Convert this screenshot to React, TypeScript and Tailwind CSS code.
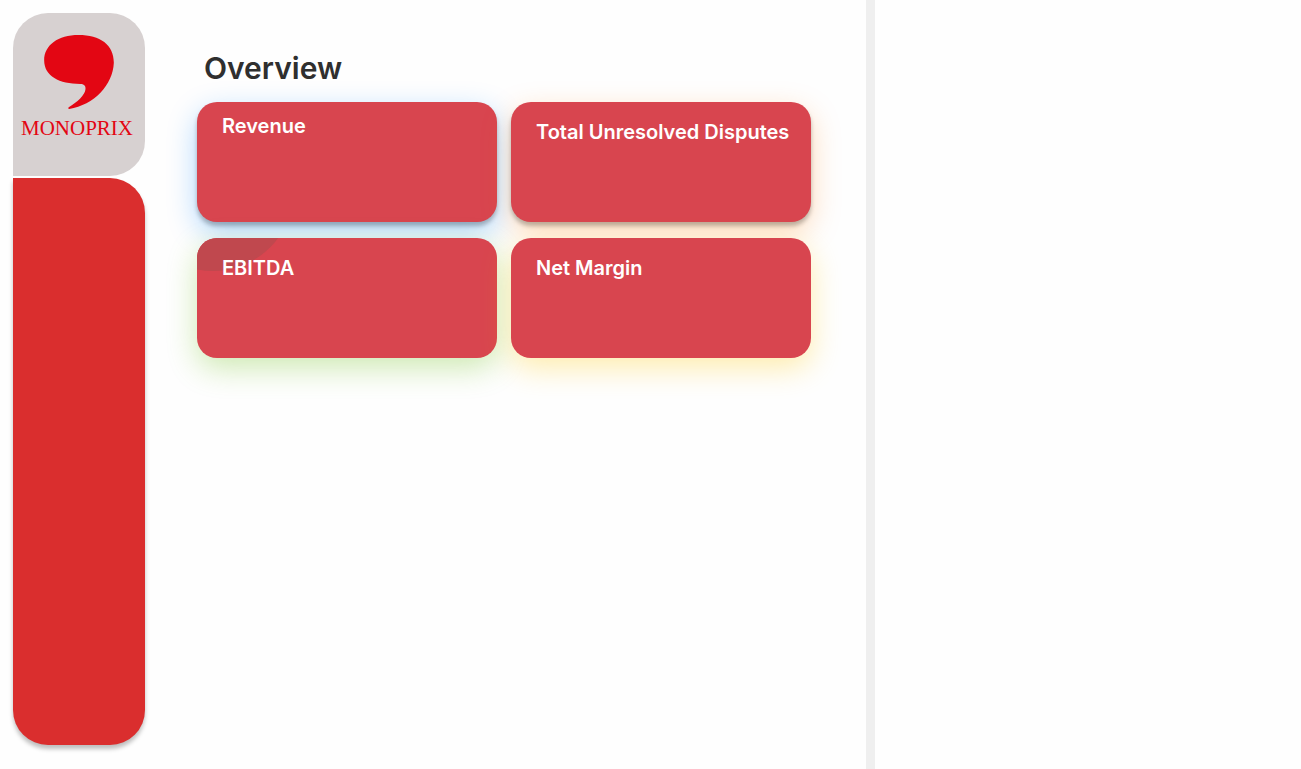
type Metric = { title: string; shadow: string; padding: string; accent?: boolean };

const metrics: Metric[] = [
  {
    title: 'Revenue',
    padding: 'pt-[10px]',
    shadow: 'shadow-[0_4px_4px_rgba(0,0,0,0.25),0_10px_30px_rgba(0,132,255,0.32)]',
  },
  {
    title: 'Total Unresolved Disputes',
    padding: 'pt-4',
    shadow: 'shadow-[0_4px_4px_rgba(0,0,0,0.25),0_10px_30px_rgba(255,122,0,0.28)]',
  },
  {
    title: 'EBITDA',
    padding: 'pt-4',
    shadow: 'shadow-[0_10px_30px_rgba(105,190,20,0.32)]',
    accent: true,
  },
  {
    title: 'Net Margin',
    padding: 'pt-4',
    shadow: 'shadow-[0_10px_30px_rgba(255,200,0,0.32)]',
  },
];

function Logo() {
  return (
    <div className="flex h-[163px] flex-col items-center rounded-[35px] rounded-bl-none bg-[#d7d1d1] pt-[22px]">
      <svg viewBox="0 0 209 222" className="h-[74px] w-[70px]" fill="#e30613" aria-hidden="true">
        <path d="M103 0C168 0 209 29 209 83C206 150 150 209 75 222C71 221 72 217 76 215C97 203 123 181 124 162C125 152 119 147 108 147C46 147 0 124 0 76C0 30 42 0 103 0Z" />
      </svg>
      <span className="mt-[7px] pr-1 font-['Liberation_Serif',serif] text-[21px] leading-6 text-[#e30613]">
        MONOPRIX
      </span>
    </div>
  );
}

function MetricCard({ title, shadow, padding, accent }: Metric) {
  return (
    <article className={`relative h-[120px] rounded-[20px] bg-[#d8454f] px-[25px] ${padding} ${shadow}`}>
      {accent && (
        <div className="absolute inset-0 overflow-hidden rounded-[20px]" aria-hidden="true">
          <div className="absolute -top-[129px] -left-[65px] size-[162px] rounded-full bg-[#c0484e]" />
        </div>
      )}
      <h2 className="relative text-[20px] leading-7 font-semibold whitespace-nowrap text-white">{title}</h2>
    </article>
  );
}

export default function App() {
  return (
    <div className="flex min-h-screen bg-[#fefefe] font-['Inter',sans-serif]">
      <aside className="flex w-[145px] shrink-0 flex-col gap-[2px] pt-[13px] pb-6 pl-[13px]">
        <Logo />
        <nav
          aria-label="Main"
          className="flex-1 rounded-[35px] rounded-tl-none bg-[#da2e2e] shadow-[0_4px_4px_rgba(0,0,0,0.25)]"
        />
      </aside>
      <main className="min-w-0 flex-1 pt-12 pr-[55px] pl-[52px]">
        <h1 className="pl-[7px] text-[30px] leading-10 font-semibold text-[#2f2f2f]">Overview</h1>
        <section className="mt-[14px] grid grid-cols-2 gap-x-[14px] gap-y-4">
          {metrics.map((m) => (
            <MetricCard key={m.title} {...m} />
          ))}
        </section>
      </main>
      <aside className="w-[435px] shrink-0 border-l-[9px] border-[#efefef]" />
    </div>
  );
}
